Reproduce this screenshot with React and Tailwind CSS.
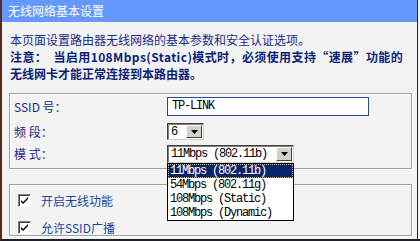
import React from "react";

const cjk = { fontFamily: '"Noto Sans CJK SC", "Liberation Sans", sans-serif' };
const mono = { fontFamily: '"Liberation Mono", "Noto Sans CJK SC", monospace' };

const Arrow = () => (
  <div className="w-[16px] h-full bg-[#d4d0c8] border border-t-white border-l-white border-r-[#404040] border-b-[#404040] flex items-center justify-center">
    <svg width="7" height="4" viewBox="0 0 7 4">
      <path d="M0 0h7L3.5 4z" fill="#000" />
    </svg>
  </div>
);

const Select = ({ value, width, height }) => (
  <div
    className="flex bg-white border border-t-[#404040] border-l-[#404040] border-r-[#d4d0c8] border-b-[#d4d0c8] shadow-[inset_1px_1px_0_#808080]"
    style={{ width, height }}
  >
    <div className="flex-1 pl-[3px] text-[12px] tracking-[-1.2px] leading-[16px] text-black" style={mono}>
      {value}
    </div>
    <div className="p-[1px]">
      <Arrow />
    </div>
  </div>
);

const CheckBox = () => (
  <div className="w-[13px] h-[13px] bg-white border border-t-[#808080] border-l-[#808080] border-r-white border-b-white shadow-[inset_1px_1px_0_#404040] flex items-center justify-center">
    <svg width="9" height="9" viewBox="0 0 9 9">
      <path d="M1 4l2 2 5-5v2l-5 5-2-2z" fill="#000" />
    </svg>
  </div>
);

const modes = ["11Mbps (802.11b)", "54Mbps (802.11g)", "108Mbps (Static)", "108Mbps (Dynamic)"];

export default function App() {
  return (
    <div className="w-[420px] h-[241px] flex bg-[#e8e8e8]" style={cjk}>
      <div className="w-[418px] h-[241px] flex flex-col bg-[#f3f3f3] border-l-2 border-l-[#5a2a1e] border-r border-r-[#22264a] border-b-2 border-b-[#1e1e2a]">
        <div className="h-[22px] bg-[#6699ff] text-white text-[12px] leading-[22px] pl-[6px]">
          无线网络基本设置
        </div>

        <div className="px-[8px] pt-[9px] text-[12px] leading-[17px] text-[#1a2a8a] whitespace-nowrap">
          <p>本页面设置路由器无线网络的基本参数和安全认证选项。</p>
          <p className="font-bold text-[#0c1f7a] tracking-[0.4px]">
            注意：&nbsp; 当启用108Mbps(Static)模式时，必须使用支持“速展”功能的
          </p>
          <p className="font-bold text-[#0c1f7a]">无线网卡才能正常连接到本路由器。</p>
        </div>

        <div className="relative mt-[11px] ml-[7px] w-[403px] h-[76px] border border-[#a0a0a0] shadow-[inset_1px_1px_0_#fff,1px_1px_0_#fff] pt-[3px] text-[12px] text-[#1a2a8a]">
          <div className="flex items-center h-[19px]">
            <div className="w-[157px] pl-[4px]">SSID 号：</div>
            <div
              className="w-[202px] h-[19px] bg-white border border-[#2c4a9a] pl-[4px] text-[12px] tracking-[-1.2px] leading-[17px] text-black"
              style={mono}
            >
              TP-LINK
            </div>
          </div>
          <div className="flex items-center h-[17px] mt-[7px]">
            <div className="w-[157px] pl-[4px]">频 段：</div>
            <Select value="6" width={37} height={17} />
          </div>
          <div className="flex items-center h-[18px] mt-[5px]">
            <div className="w-[157px] pl-[4px]">模 式：</div>
            <Select value="11Mbps (802.11b)" width={127} height={18} />
          </div>

          <div
            className="absolute left-[157px] top-[69px] w-[127px] bg-white border border-black z-10 text-[12px] tracking-[-1.2px] leading-[14px] text-black"
            style={mono}
          >
            {modes.map((m, i) => (
              <div
                key={m}
                className={
                  i === 0
                    ? "h-[14px] pl-[2px] bg-[#0a246a] text-white outline outline-1 outline-dotted outline-[#c8c090] -outline-offset-1"
                    : "h-[14px] pl-[2px]"
                }
              >
                {m}
              </div>
            ))}
          </div>
        </div>

        <div className="mt-[15px] ml-[7px] w-[403px] h-[52px] border border-[#a0a0a0] shadow-[inset_1px_1px_0_#fff,1px_1px_0_#fff] pl-[8px] pt-[9px] text-[12px] text-[#1745a8] flex flex-col gap-[14px]">
          <div className="flex items-center gap-[10px] h-[13px]">
            <CheckBox />
            <span>开启无线功能</span>
          </div>
          <div className="flex items-center gap-[10px] h-[13px]">
            <CheckBox />
            <span>允许SSID广播</span>
          </div>
        </div>
      </div>
      <div className="flex-1 bg-[#f3f3f3] border-b-2 border-b-[#1e1e2a]" />
    </div>
  );
}
